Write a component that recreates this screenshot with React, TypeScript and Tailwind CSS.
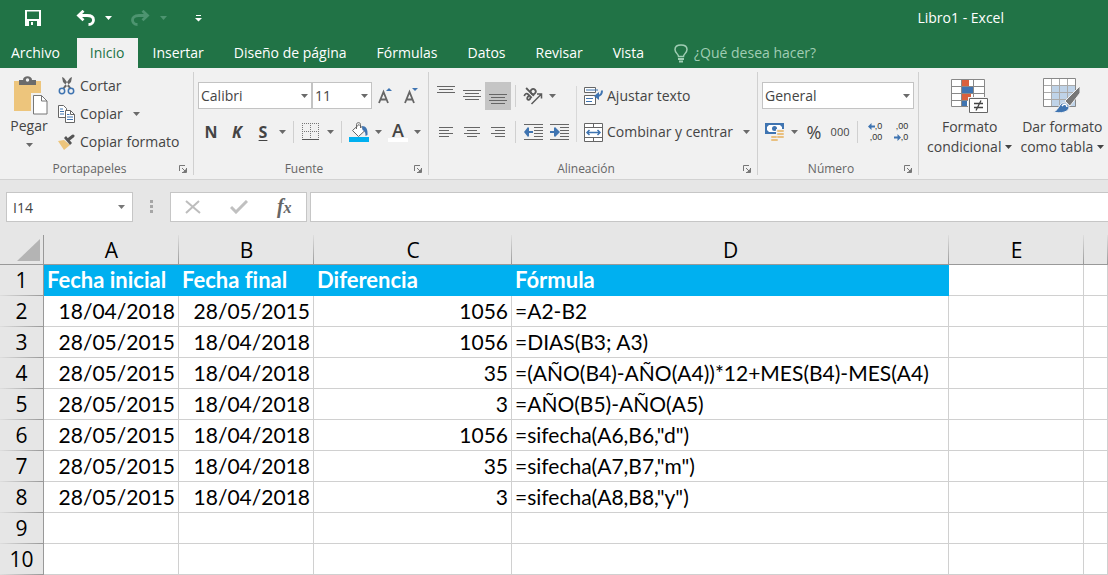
import React, { useState } from 'react';

type Align = 'left' | 'right';

const tabs = ['Archivo', 'Inicio', 'Insertar', 'Diseño de página', 'Fórmulas', 'Datos', 'Revisar', 'Vista'];

const columns = [
  { name: 'A', width: 'w-[135px]', align: 'right' as Align },
  { name: 'B', width: 'w-[135px]', align: 'right' as Align },
  { name: 'C', width: 'w-[198px]', align: 'right' as Align },
  { name: 'D', width: 'w-[437px]', align: 'left' as Align },
  { name: 'E', width: 'w-[135px]', align: 'left' as Align },
  { name: '', width: '', align: 'left' as Align },
];

const titles = ['Fecha inicial', 'Fecha final', 'Diferencia', 'Fórmula'];

const rows = [
  ['18/04/2018', '28/05/2015', '1056', '=A2-B2'],
  ['28/05/2015', '18/04/2018', '1056', '=DIAS(B3; A3)'],
  ['28/05/2015', '18/04/2018', '35', '=(AÑO(B4)-AÑO(A4))*12+MES(B4)-MES(A4)'],
  ['28/05/2015', '18/04/2018', '3', '=AÑO(B5)-AÑO(A5)'],
  ['28/05/2015', '18/04/2018', '1056', '=sifecha(A6,B6,"d")'],
  ['28/05/2015', '18/04/2018', '35', '=sifecha(A7,B7,"m")'],
  ['28/05/2015', '18/04/2018', '3', '=sifecha(A8,B8,"y")'],
  [],
  [],
];

const Caret = () => (
  <svg width="7" height="4" viewBox="0 0 7 4" className="shrink-0" fill="currentColor">
    <path d="M0 0h7L3.5 4z" />
  </svg>
);

const CaretButton = ({ label }: { label: string }) => (
  <button type="button" aria-label={label} className="flex h-7 w-[13px] items-center justify-center text-[#6a6a6a]">
    <Caret />
  </button>
);

const IconButton = ({ label, active, children }: { label: string; active?: boolean; children: React.ReactNode }) => (
  <button
    type="button"
    aria-label={label}
    className={`flex h-7 w-[26px] shrink-0 items-center justify-center ${active ? 'bg-[#c5c5c5]' : ''}`}
  >
    {children}
  </button>
);

const Divider = () => <span className="mx-1 h-[22px] w-px shrink-0 bg-[#d0d0d0]" />;

// Grupo de la cinta con su título abajo
const Group = ({ title, launcher, children }: { title: string; launcher?: boolean; children: React.ReactNode }) => (
  <section aria-label={title} className="flex shrink-0">
    <div className="flex flex-col justify-between">
      {children}
      <div className="flex h-5 items-center px-1 text-[12px] text-[#666]">
        <span className="flex-1 pr-1 text-center">{title}</span>
        {launcher && (
          <button type="button" aria-label={`Opciones de ${title}`} className="pr-[2px]">
            <svg width="8" height="8" viewBox="0 0 8 8" fill="none" stroke="#777">
              <path d="M.5 6V.5H6M3 3l3 3M7.5 3v4.5H3" />
              <path d="M7 4v3H4z" fill="#777" stroke="none" />
            </svg>
          </button>
        )}
      </div>
    </div>
    <span className="mt-1 mb-1 w-px bg-[#d0d0d0]" />
  </section>
);

const Combo = ({ label, value, className }: { label: string; value: string; className: string }) => (
  <div className={`relative ${className}`}>
    <select
      aria-label={label}
      defaultValue={value}
      className="h-[27px] w-full appearance-none border border-[#c3c3c3] bg-white pl-[2px] text-[14px] leading-5 text-[#444] outline-none"
    >
      <option>{value}</option>
    </select>
    <span className="pointer-events-none absolute inset-y-0 right-1 flex items-center text-[#6a6a6a]">
      <Caret />
    </span>
  </div>
);

// Líneas horizontales: [x, y, ancho]
const Lines = ({ items }: { items: number[][] }) => (
  <svg width="26" height="28" viewBox="0 0 26 28" fill="#666">
    {items.map(([x, y, w]) => (
      <rect key={y} x={x} y={y} width={w} height="1" />
    ))}
  </svg>
);

const PasteIcon = () => (
  <svg width="40" height="40" viewBox="-4 0 40 40">
    <path d="M1 5h27v30H1z" fill="#edc57c" />
    <path d="M6 9V4h4c0-5 9-5 9 0h4v5z" fill="#6b6b6b" />
    <circle cx="14.5" cy="4" r="1.7" fill="#f1f1f1" />
    <path d="M19.5 18.5h9l6 6v14h-15z" fill="#fff" stroke="#f1f1f1" strokeWidth="3" />
    <path d="M20.5 19.5h8l5.500 5.500v13H20.500z" fill="#fff" stroke="#777" />
    <path d="M28.500 19.500V25H34" fill="none" stroke="#777" />
  </svg>
);

const CutIcon = () => (
  <svg width="18" height="18" viewBox="0 0 18 18" fill="none">
    <path d="M4 0l2 1 8 11-2 0L5 5zM14 0l-2 1L4 12l2 0 7-7z" fill="#666" />
    <circle cx="4" cy="14" r="2.700" stroke="#3f74b1" strokeWidth="1.500" />
    <circle cx="13" cy="14" r="2.700" stroke="#3f74b1" strokeWidth="1.500" />
  </svg>
);

const CopyIcon = () => (
  <svg width="18" height="18" viewBox="0 0 18 18">
    <path d="M.5.5h5l3 3v9h-8z" fill="#fff" stroke="#666" />
    <path d="M2 4h3M2 6.500h4M2 9h4" stroke="#3f74b1" />
    <path d="M7.500 5.500h5l4 4v8h-9z" fill="#fff" stroke="#666" />
    <path d="M12.500 5.500v4h4" fill="none" stroke="#666" />
    <path d="M9 9.500h2.500M9 12h6M9 14.500h6" stroke="#3f74b1" />
  </svg>
);

const BrushIcon = () => (
  <svg width="18" height="16" viewBox="0 0 18 16">
    <path d="M0 7l6-1 6 5-6 5z" fill="#edc57c" />
    <path d="M6 4l2-2 6 7-2 2z" fill="#555" />
    <path d="M10.500 5.500L15 2" stroke="#555" strokeWidth="3" strokeLinecap="round" />
  </svg>
);

const FontSizeIcon = ({ up }: { up?: boolean }) => (
  <svg width="16" height="20" viewBox="0 0 16 20">
    <path d="M2 17L6.500 6 11 17M3.500 13.500h6" fill="none" stroke="#666" strokeWidth="1.800" />
    <path d={up ? 'M9 5h6l-3-3z' : 'M9 2h6l-3 3z'} fill="#3f74b1" />
  </svg>
);

const BordersIcon = () => (
  <svg width="18" height="18" viewBox="0 0 18 18" fill="none" stroke="#777">
    <path d="M0 .5h17M0 8.500h17M.5 0v17M8.500 0v17M16.500 0v17" strokeDasharray="1 1" />
    <path d="M0 16.500h17" stroke="#555" />
  </svg>
);

const BucketIcon = () => (
  <svg width="20" height="20" viewBox="0 0 20 20">
    <path d="M3.500 8.500L10 2.500l6 6-6.500 6z" fill="#fff" stroke="#666" />
    <path d="M7.500 7V2.500c0-2.500 4-2.500 4 0V6" fill="none" stroke="#666" />
    <path d="M13 4c4 0 6 3 5.500 9l-2 1c0-4-1-5-3-6z" fill="#3f74b1" />
    <path d="M0 15h20v5H0z" fill="#00b0f0" />
  </svg>
);

const OrientationIcon = () => (
  <svg width="20" height="18" viewBox="0 0 20 18" fill="none" stroke="#5a5a5a" strokeWidth="1.800">
    <g transform="rotate(-45 7 7)">
      <path d="M1.500 4.500c2-1.500 4-.5 4 1.500v5M5.500 7.500C3 7 1 8 1.500 9.500s3 1.500 4-.5" />
      <path d="M8.500 0v11" />
      <circle cx="11" cy="7.500" r="2.500" />
    </g>
    <path d="M8.500 17L18 7.500M14 7h4.500v4.500" strokeWidth="1.500" />
  </svg>
);

const IndentIcon = ({ right }: { right?: boolean }) => (
  <svg width="19" height="17" viewBox="0 0 19 17">
    <path d="M0 .5h19M10 3.500h9M10 6.500h9M10 9.500h9M10 12.500h9M0 15.500h19" stroke="#666" />
    <path d={right ? 'M0 7h4V4l1-1 5 5-5 5-1-1V9H0z' : 'M9 7H5V4L4 3 0 8l4 5 1-1V9h4z'} fill="#3f74b1" />
  </svg>
);

const WrapIcon = () => (
  <svg width="20" height="19" viewBox="0 0 20 19" fill="none">
    <path d="M.5.5h11v5H.5z" fill="#fff" stroke="#666" />
    <path d="M.5 8.500h11v9H.5z" fill="#fff" stroke="#666" />
    <path d="M2 3h12M2 11.500h7M2 14.500h6" stroke="#3f74b1" />
    <path d="M18 3.500c0 4-2 5.500-5 5.500" stroke="#3f74b1" strokeWidth="2" />
    <path d="M10 9l5-4v8z" fill="#3f74b1" />
  </svg>
);

const MergeIcon = () => (
  <svg width="20" height="19" viewBox="0 0 20 19" fill="none">
    <path d="M.5.5h18v18H.5zM.5 4.500h18M.5 14.500h18M9.500.5v4M9.500 14.500v4" fill="#fff" stroke="#666" />
    <path d="M3 9.500h13M5.500 7L3 9.500 5.500 12M13.500 7L16 9.500 13.500 12" stroke="#3f74b1" strokeWidth="1.500" />
  </svg>
);

const MoneyIcon = () => (
  <svg width="20" height="19" viewBox="0 0 20 19">
    <path d="M0 0h19v11H0z" fill="#3f74b1" />
    <path d="M4 2h11l2 2v3l-2 2H4L2 7V4z" fill="#fff" />
    <circle cx="9.500" cy="5.500" r="2.500" fill="#3f74b1" />
    <path d="M11 6h9v12H5v-6h6z" fill="#f1f1f1" />
    <path d="M13 8h5M13 11h5M13 14h5M7 14h4M7 17h5" stroke="#e9c080" strokeWidth="2" strokeLinecap="round" />
  </svg>
);

const DecimalArrow = ({ flip }: { flip?: boolean }) => (
  <svg width="7" height="7" viewBox="0 0 7 7" fill="#3f74b1">
    <path d={flip ? 'M7 3.500L3.500 0v2.500H0v2h3.500V7z' : 'M0 3.500L3.500 0v2.500H7v2H3.500V7z'} />
  </svg>
);

const DecimalButton = ({ more }: { more?: boolean }) => (
  <IconButton label={more ? 'Aumentar decimales' : 'Disminuir decimales'}>
    <span className="flex flex-col items-end font-['Liberation_Sans',sans-serif] text-[9px] leading-[11px] text-[#333]">
      <span className="flex items-center">
        {more && <DecimalArrow />}
        {more ? ',0' : ',00'}
      </span>
      <span className="flex items-center">
        {!more && <DecimalArrow flip />}
        {more ? ',00' : ',0'}
      </span>
    </span>
  </IconButton>
);

const ConditionalIcon = () => (
  <svg width="38" height="36" viewBox="0 0 38 36">
    <path d="M.5 1.500h33v27H.5z" fill="#fff" />
    <path d="M11 2h7v6h-7zM11 16h9v6h-9z" fill="#d9603c" />
    <path d="M11 9h11v6H11zM11 23h5v6h-5z" fill="#3f74b1" />
    <path d="M.5 1.500h33v27H.5zM10.500 1v28M22.500 1v28M.5 8.500h33M.5 15.500h33M.5 22.500h33" fill="none" stroke="#888" />
    <path d="M17 19h21v17H17z" fill="#f1f1f1" />
    <path d="M18.500 20.500h18v14h-18z" fill="#fff" stroke="#666" />
    <path d="M23 25.500h9M23 29.500h9M30 22.500l-5 10" stroke="#444" strokeWidth="1.300" />
  </svg>
);

const TableIcon = () => (
  <svg width="38" height="36" viewBox="0 0 38 36">
    <path d="M.5.5h32v28H.5z" fill="#fff" />
    <path d="M9 8h24v21H9z" fill="#bfd3e8" />
    <path d="M8.500 0v28M16.500 0v28M24.500 0v28M.5 7.500h32M.5 14.500h32M.5 21.500h32" fill="none" stroke="#aaa" />
    <path d="M.5.5h32v28H.5z" fill="none" stroke="#888" />
    <path d="M37 8v7L27 28l-5-5z" fill="#777" stroke="#f1f1f1" />
    <path d="M10 34c4-1 5-4 7-7 3-4 9-2 9 2 0 5-8 7-16 5z" fill="#3f74b1" stroke="#f1f1f1" />
    <path d="M19 28c2-3 5-2 5 1" fill="none" stroke="#fff" strokeWidth="1.500" />
  </svg>
);

const Undo = ({ flip }: { flip?: boolean }) => (
  <svg width="19" height="16" viewBox="0 0 19 16" fill="none" stroke="currentColor" strokeWidth="2.800">
    <path
      d={
        flip
          ? 'M17 5.500H8C3 5.500 1.500 8 1.500 10s1.500 4.500 5 4.500M11.500.800l5 4.700-5 4.700'
          : 'M2 5.500h9c5 0 6.500 2.500 6.500 4.500s-1.500 4.500-5 4.500M7.500.800l-5 4.700 5 4.700'
      }
    />
  </svg>
);

const RowHeader = ({ index }: { index: number }) => (
  <th
    scope="row"
    className="border-r border-[#999] bg-[#e6e6e6] bg-[linear-gradient(to_right,#dedede,#999)] bg-[length:100%_1px] bg-bottom bg-no-repeat p-0 text-center font-['Open_Sans',sans-serif] text-[21px] leading-[31px] font-normal"
  >
    {index}
  </th>
);

const App: React.FC = () => {
  const [activeTab, setActiveTab] = useState('Inicio');
  const [formula, setFormula] = useState('');

  return (
    <div className="min-h-screen overflow-hidden bg-[#e6e6e6] font-['Open_Sans',sans-serif] text-[14px] leading-5 text-[#444]">
      <header className="bg-[#217346] text-white">
        <div className="flex h-9 items-center pl-6">
          <button type="button" aria-label="Guardar" className="mr-[34px]">
            <svg width="18" height="16" viewBox="0 0 18 16">
              <path d="M1 0h16v16H1zM3 1.500V9h12V1.500zM5 11v5h8v-5z" fill="#fff" fillRule="evenodd" />
              <path d="M7 12h2v3H7z" fill="#fff" />
            </svg>
          </button>
          <button type="button" aria-label="Deshacer" className="mr-[10px]">
            <Undo />
          </button>
          <button type="button" aria-label="Opciones de deshacer" className="mr-[19px]">
            <Caret />
          </button>
          <button type="button" aria-label="Rehacer" className="mr-[10px] text-[#4d9470]">
            <Undo flip />
          </button>
          <button type="button" aria-label="Opciones de rehacer" className="mr-7 text-[#4d9470]">
            <Caret />
          </button>
          <button type="button" aria-label="Personalizar barra">
            <svg width="7" height="7" viewBox="0 0 7 7" fill="#fff">
              <path d="M1 0h5v1H1zM0 3h7L3.500 6.500z" />
            </svg>
          </button>
          <h1 className="mr-[104px] ml-auto">Libro1 - Excel</h1>
        </div>
        <nav className="flex h-8 items-end whitespace-nowrap">
          {tabs.map((tab) => (
            <button
              key={tab}
              type="button"
              onClick={() => setActiveTab(tab)}
              className={`h-[30px] first:pr-[17px] first:pl-[11px] ${tab === activeTab ? 'bg-[#f1f1f1] px-[13px] text-[#217346]' : 'px-[15px]'}`}
            >
              {tab}
            </button>
          ))}
          <button type="button" className="flex h-[30px] items-center gap-[6px] pl-[15px] text-[#a0cdb4]">
            <svg width="14" height="19" viewBox="0 0 14 19" fill="none" stroke="currentColor" strokeWidth="1.500">
              <path d="M4.500 12.500c0-2.500-3.500-3.500-3.500-7C1 2.500 3.500 1 7 1s6 1.500 6 4.500c0 3.500-3.500 4.500-3.500 7z" />
              <path d="M4 15h6M5 17.500h4" strokeWidth="2" />
            </svg>
            ¿Qué desea hacer?
          </button>
        </nav>
      </header>

      <div className="flex h-28 border-b border-[#d2d2d2] bg-[#f1f1f1] whitespace-nowrap">
        <Group title="Portapapeles" launcher>
          <div className="flex w-[193px] pt-1">
            <button type="button" className="flex w-[58px] flex-col items-center pt-1">
              <PasteIcon />
              <span>Pegar</span>
              <span className="mt-[7px] text-[#6a6a6a]">
                <Caret />
              </span>
            </button>
            <div className="flex flex-col items-start">
              <button type="button" className="flex h-7 items-center gap-1">
                <CutIcon />
                Cortar
              </button>
              <div className="flex">
                <button type="button" className="flex h-7 items-center gap-1 pr-[7px]">
                  <CopyIcon />
                  Copiar
                </button>
                <CaretButton label="Opciones de copiar" />
              </div>
              <button type="button" className="flex h-7 items-center gap-1">
                <BrushIcon />
                Copiar formato
              </button>
            </div>
          </div>
        </Group>

        <Group title="Fuente" launcher>
          <div className="flex flex-col gap-2 px-1 pt-[14px]">
            <div className="flex h-7">
              <Combo label="Fuente" value="Calibri" className="w-[114px]" />
              <Combo label="Tamaño de fuente" value="11" className="w-[60px]" />
              <IconButton label="Aumentar tamaño">
                <FontSizeIcon up />
              </IconButton>
              <IconButton label="Disminuir tamaño">
                <FontSizeIcon />
              </IconButton>
            </div>
            <div className="flex h-7 items-center">
              <IconButton label="Negrita">
                <b className="text-[16px]">N</b>
              </IconButton>
              <IconButton label="Cursiva">
                <b className="text-[16px] italic">K</b>
              </IconButton>
              <IconButton label="Subrayado">
                <b className="text-[16px] underline underline-offset-2">S</b>
              </IconButton>
              <CaretButton label="Tipos de subrayado" />
              <Divider />
              <IconButton label="Bordes">
                <BordersIcon />
              </IconButton>
              <CaretButton label="Tipos de borde" />
              <Divider />
              <IconButton label="Color de relleno">
                <BucketIcon />
              </IconButton>
              <CaretButton label="Colores de relleno" />
              <IconButton label="Color de fuente">
                <span className="flex h-5 w-5 items-center justify-center border-b-4 border-white text-[18px] leading-4 font-semibold">
                  A
                </span>
              </IconButton>
              <CaretButton label="Colores de fuente" />
            </div>
          </div>
        </Group>

        <Group title="Alineación" launcher>
          <div className="flex items-center pt-[14px] pr-1 pl-1">
            <div className="flex flex-col gap-2">
              <div className="flex h-7 items-center">
                <IconButton label="Alinear en la parte superior">
                  <Lines items={[[4, 4, 18], [6, 7, 14], [4, 10, 18]]} />
                </IconButton>
                <IconButton label="Alinear en el medio">
                  <Lines items={[[4, 8, 18], [6, 11, 14], [4, 14, 18], [6, 17, 14]]} />
                </IconButton>
                <IconButton label="Alinear en la parte inferior" active>
                  <Lines items={[[4, 12, 18], [6, 15, 14], [4, 18, 18], [6, 21, 14]]} />
                </IconButton>
                <Divider />
                <IconButton label="Orientación">
                  <OrientationIcon />
                </IconButton>
                <CaretButton label="Opciones de orientación" />
              </div>
              <div className="flex h-7 items-center">
                <IconButton label="Alinear a la izquierda">
                  <Lines items={[[6, 9, 14], [6, 12, 10], [6, 15, 14], [6, 18, 10]]} />
                </IconButton>
                <IconButton label="Centrar">
                  <Lines items={[[5, 9, 16], [8, 12, 10], [5, 15, 16], [8, 18, 10]]} />
                </IconButton>
                <IconButton label="Alinear a la derecha">
                  <Lines items={[[6, 9, 14], [10, 12, 10], [6, 15, 14], [10, 18, 10]]} />
                </IconButton>
                <Divider />
                <IconButton label="Disminuir sangría">
                  <IndentIcon />
                </IconButton>
                <IconButton label="Aumentar sangría">
                  <IndentIcon right />
                </IconButton>
              </div>
            </div>
            <span className="mx-1 h-14 w-px bg-[#d8d8d8]" />
            <div className="flex flex-col items-start gap-2 pl-[3px]">
              <button type="button" className="flex h-7 items-center gap-[3px]">
                <WrapIcon />
                Ajustar texto
              </button>
              <div className="flex">
                <button type="button" className="flex h-7 items-center gap-[3px] pr-[7px]">
                  <MergeIcon />
                  Combinar y centrar
                </button>
                <CaretButton label="Opciones de combinar" />
              </div>
            </div>
          </div>
        </Group>

        <Group title="Número" launcher>
          <div className="flex flex-col gap-2 px-1 pt-[14px]">
            <div className="h-7">
              <Combo label="Formato de número" value="General" className="w-full" />
            </div>
            <div className="flex h-7 items-center">
              <IconButton label="Formato de moneda">
                <MoneyIcon />
              </IconButton>
              <CaretButton label="Monedas" />
              <IconButton label="Estilo porcentual">
                <span className="text-[18px]">%</span>
              </IconButton>
              <IconButton label="Estilo millares">
                <span className="text-[11px]">000</span>
              </IconButton>
              <Divider />
              <DecimalButton more />
              <DecimalButton />
            </div>
          </div>
        </Group>

        <div className="flex shrink-0 items-start gap-2 pt-[10px] pl-2">
          <button type="button" className="flex flex-col items-center">
            <ConditionalIcon />
            <span className="mt-[3px]">Formato</span>
            <span className="flex items-center gap-1">
              condicional <Caret />
            </span>
          </button>
          <button type="button" className="flex flex-col items-center">
            <TableIcon />
            <span className="mt-[3px]">Dar formato</span>
            <span className="flex items-center gap-1">
              como tabla <Caret />
            </span>
          </button>
        </div>
      </div>

      <div className="flex pt-3 pb-[13px] pl-[6px]">
        <div className="relative w-[127px]">
          <input
            aria-label="Cuadro de nombres"
            defaultValue="I14"
            className="h-[30px] w-full border border-[#c6c6c6] bg-white pl-[6px] outline-none"
          />
          <span className="absolute inset-y-0 right-2 flex items-center text-[#777]">
            <Caret />
          </span>
        </div>
        <svg width="37" height="30" viewBox="0 0 37 30" fill="#a6a6a6">
          <path d="M17 8h3v3h-3zM17 13h3v3h-3zM17 18h3v3h-3z" />
        </svg>
        <div className="mr-[3px] flex h-[30px] w-[137px] items-center justify-around border border-[#c6c6c6] bg-white">
          <button type="button" aria-label="Cancelar">
            <svg width="16" height="14" viewBox="0 0 16 14" stroke="#bdbdbd" strokeWidth="2" fill="none">
              <path d="M1 1l14 12M14 1L1 13" />
            </svg>
          </button>
          <button type="button" aria-label="Introducir">
            <svg width="18" height="14" viewBox="0 0 18 14" stroke="#c0c0c0" strokeWidth="3" fill="none">
              <path d="M1 7l5 5L17 1" />
            </svg>
          </button>
          <button
            type="button"
            aria-label="Insertar función"
            className="font-['Liberation_Serif',serif] text-[20px] font-bold text-[#666] italic"
          >
            f<span className="text-[16px]">x</span>
          </button>
        </div>
        <input
          aria-label="Barra de fórmulas"
          value={formula}
          onChange={(e) => setFormula(e.target.value)}
          className="h-[30px] min-w-0 flex-1 border border-r-0 border-[#c6c6c6] bg-white px-2 outline-none"
        />
      </div>

      <table className="w-full table-fixed border-separate border-spacing-0 bg-white text-black">
        <thead>
          <tr className="h-[30px] bg-[#e6e6e6] text-[21px] leading-7">
            <th className="w-11 border-r border-b border-[#999] p-0">
              <svg width="23" height="22" viewBox="0 0 23 22" className="mr-[3px] ml-auto">
                <path d="M23 0v22H0z" fill="#b4b4b4" />
              </svg>
            </th>
            {columns.map((col) => (
              <th
                key={col.name}
                scope="col"
                className={`${col.width} border-b border-[#999] bg-[linear-gradient(to_bottom,#dedede,#999)] bg-[length:1px_100%] bg-right bg-no-repeat p-0 font-normal`}
              >
                {col.name}
              </th>
            ))}
          </tr>
        </thead>
        <tbody className="font-['Lato',sans-serif] text-[21px] leading-[30px] whitespace-nowrap">
          <tr className="h-[31px]">
            <RowHeader index={1} />
            {columns.map((col, i) => (
              <td
                key={col.name}
                className={
                  titles[i]
                    ? 'border-b border-[#00b0f0] bg-[#00b0f0] p-0 pl-[3px] text-[22px] font-bold text-white [font-variant-ligatures:none]'
                    : 'border-r border-b border-[#d0d0d0] p-0'
                }
              >
                {titles[i]}
              </td>
            ))}
          </tr>
          {rows.map((row, r) => (
            <tr key={r} className="h-[31px]">
              <RowHeader index={r + 2} />
              {columns.map((col, i) => (
                <td
                  key={col.name}
                  className={`border-r border-b border-[#d0d0d0] p-0 px-[3px] ${col.align === 'right' ? 'text-right' : 'text-left'}`}
                >
                  {row[i]}
                </td>
              ))}
            </tr>
          ))}
        </tbody>
      </table>
    </div>
  );
};

export default App;
